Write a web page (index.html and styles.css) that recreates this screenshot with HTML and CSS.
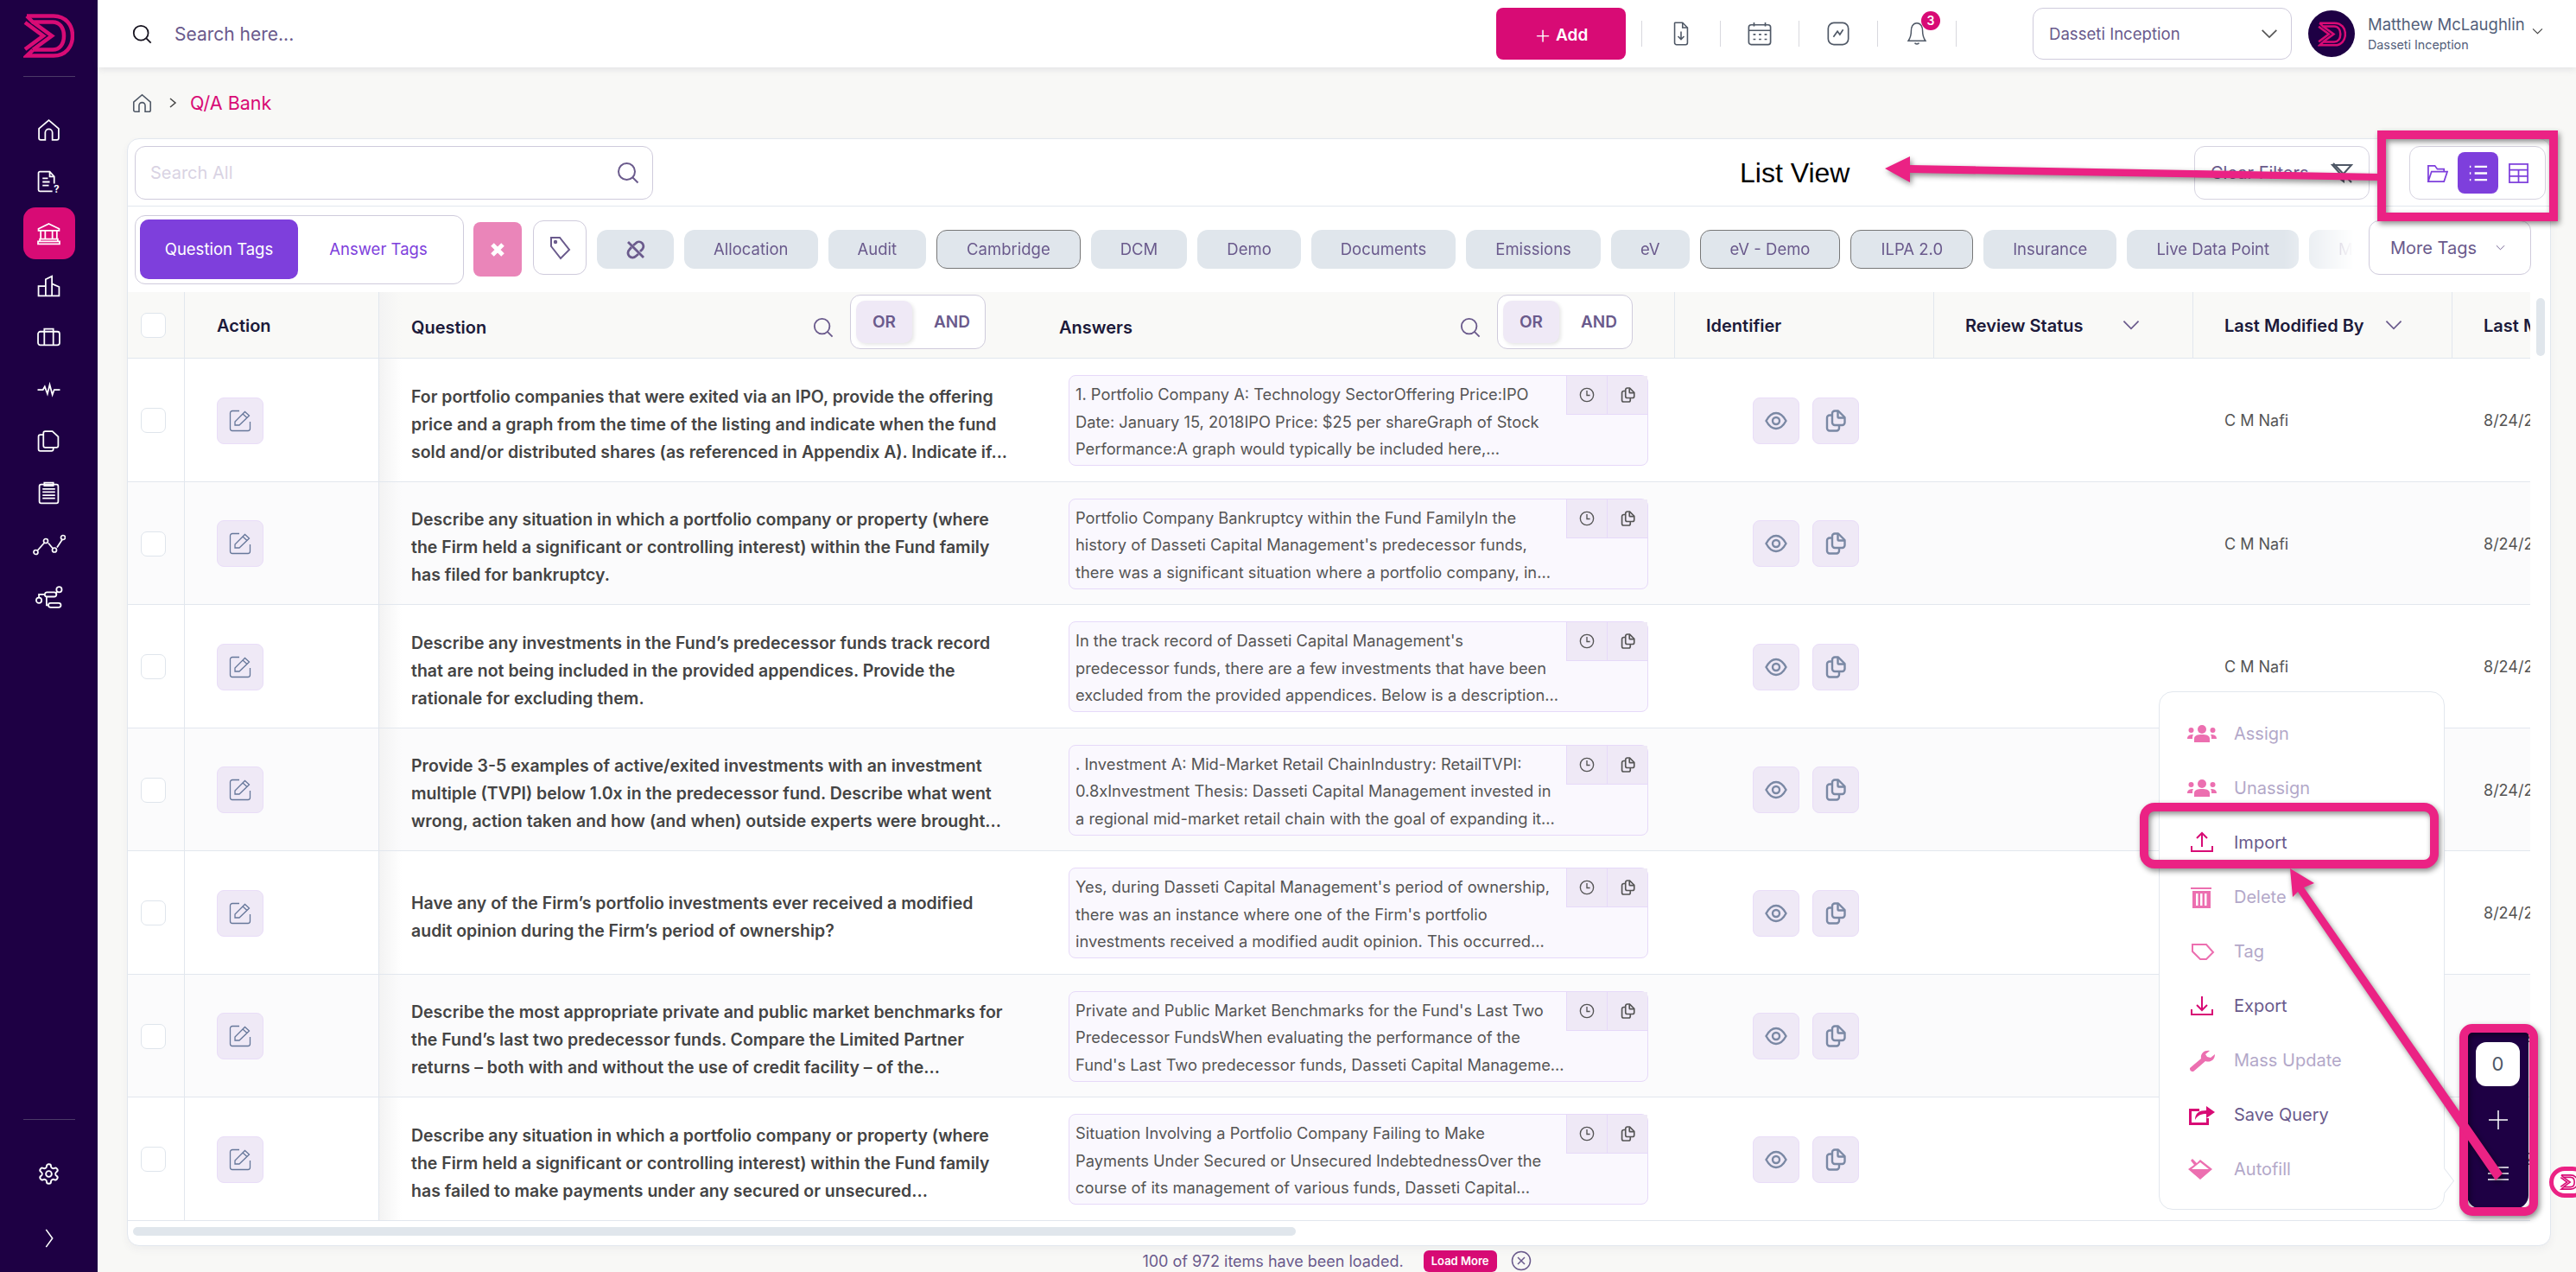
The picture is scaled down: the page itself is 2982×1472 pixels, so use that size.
FILE: index.html
```html
<!DOCTYPE html>
<html lang="en">

<head>
    <meta charset="UTF-8">
    <title>Q/A Bank</title>
    <link rel="stylesheet" href="styles.css">
</head>

<body>
    <svg class="sprites" width="0" height="0">
        <symbol id="logo" viewBox="0 0 59 51">
            <g fill="none" stroke="currentColor" stroke-width="4.500" stroke-linejoin="miter">
                <path d="M4 2.500H35C49 2.500 57 13 57 25.500S49 48.500 35 48.500H4L11 42" />
                <path d="M4 2.500L11 9.500H34C42 9.500 47 16 47 25.500S42 41.500 34 41.500H11" />
                <path d="M2 10L23 25.500L2 41" />
                <path d="M11 9.500L33 25.500L11 41.500" />
            </g>
        </symbol>
        <symbol id="edit" viewBox="0 0 26 26">
            <g fill="none" stroke="currentColor" stroke-width="1.300">
                <path d="M12 1.500H4A2.500 2.500 0 0 0 1.500 4V22A2.500 2.500 0 0 0 4 24.500H22A2.500 2.500 0 0 0 24.500 22V14" />
                <path d="M7 18V14L18.500 2.500L23.500 7L12 18Z" />
                <path d="M16 5L21 9.500" />
            </g>
        </symbol>
        <symbol id="clock" viewBox="0 0 20 20">
            <g fill="none" stroke="currentColor" stroke-width="1.500">
                <circle cx="10" cy="10" r="8.500" />
                <path d="M10 4.500V10.500H14" />
            </g>
        </symbol>
        <symbol id="copy" viewBox="0 0 24 26">
            <g fill="none" stroke="currentColor" stroke-width="2.400" stroke-linejoin="round">
                <path d="M11 1.500H15L22.500 9V15A3 3 0 0 1 19.500 18H11A3 3 0 0 1 8 15V4.500A3 3 0 0 1 11 1.500Z" />
                <path d="M14.500 2V8.500A1 1 0 0 0 15.500 9.500H22" />
                <path d="M8 6.500H5A3 3 0 0 0 2 9.500V21.500A3 3 0 0 0 5 24.500H13A3 3 0 0 0 16 21.500V18" />
            </g>
        </symbol>
        <symbol id="eye" viewBox="0 0 26 22">
            <g fill="none" stroke="currentColor" stroke-width="2.400">
                <path d="M1.500 11C5 4.500 9 2 13 2S21 4.500 24.500 11C21 17.500 17 20 13 20S5 17.500 1.500 11Z" />
                <circle cx="13" cy="11" r="4" />
            </g>
        </symbol>
        <symbol id="search" viewBox="0 0 26 26">
            <g fill="none" stroke="currentColor" stroke-width="2">
                <circle cx="11.500" cy="11.500" r="9.500" />
                <path d="M18.500 18.500L24.500 24.500" />
            </g>
        </symbol>
        <symbol id="chev" viewBox="0 0 24 14">
            <path d="M2 2L12 12L22 2" fill="none" stroke="currentColor" stroke-width="2" />
        </symbol>
        <symbol id="people" viewBox="0 0 34 20">
            <g fill="currentColor">
                <circle cx="17" cy="5" r="5" />
                <circle cx="4.500" cy="6" r="3" />
                <circle cx="29.500" cy="6" r="3" />
                <path d="M8 20V16C8 12 12 11 17 11S26 12 26 16V20Z" />
                <path d="M0 16C0 12 3 11 7 11C6 12 6 14 6 16H0Z" />
                <path d="M34 16C34 12 31 11 27 11C28 12 28 14 28 16H34Z" />
            </g>
        </symbol>
    </svg>

    <aside class="sidebar">
        <div class="brand">
            <svg class="brand_logo"><use href="#logo" /></svg>
        </div>
        <nav class="nav">
            <a class="nav_item">
                <svg viewBox="0 0 26 26"><path d="M2 11.500L13 2L24 11.500V22A2 2 0 0 1 22 24H17V16A3 3 0 0 0 9 16V24H4A2 2 0 0 1 2 22Z" /></svg>
            </a>
            <a class="nav_item">
                <svg viewBox="0 0 26 26"><path d="M19 15V7L14 1.500H3A1.500 1.500 0 0 0 1.500 3V22A1.500 1.500 0 0 0 3 23.500H17M14 1.500V7H19M6 9H12M6 13H14M6 17H13" /><text class="nav_q" x="18.500" y="25">?</text></svg>
            </a>
            <a class="nav_item nav_active">
                <svg viewBox="0 0 26 26"><path d="M13 2L24.500 7.500V9.500H1.500V7.500ZM4 9.500V19M9 9.500V19M17 9.500V19M22 9.500V19M3 19H23V21.500H3ZM1 21.500H25V24.500H1Z" /></svg>
            </a>
            <a class="nav_item">
                <svg viewBox="0 0 26 26"><path d="M1.500 24.500V13.500H9.500V24.500ZM9.500 24.500V6L16.500 2.500V24.500M16.500 11L24.500 14.500V24.500H1.500" /></svg>
            </a>
            <a class="nav_item">
                <svg viewBox="0 0 26 26"><rect x="1" y="6.500" width="24" height="15" rx="2.500" /><path d="M8 21.500V3.500H18V21.500" /></svg>
            </a>
            <a class="nav_item">
                <svg viewBox="0 0 26 26"><path d="M0.500 13.500H6.500L8.500 10L11.500 18L14 8L17 19L19 13.500H25.500" /></svg>
            </a>
            <a class="nav_item">
                <svg viewBox="0 0 26 26"><path d="M9 2H17L23.500 8V18A2 2 0 0 1 21.500 20H9A2 2 0 0 1 7 18V4A2 2 0 0 1 9 2ZM7 6H3.500A2 2 0 0 0 1.500 8V22A2 2 0 0 0 3.500 24H16A2 2 0 0 0 18 22V20" /></svg>
            </a>
            <a class="nav_item">
                <svg viewBox="0 0 26 26"><rect x="2.500" y="3.500" width="21" height="21" rx="2" /><path d="M8 1.500H18V5H8ZM6 8.500H20M6 12H20M6 15.500H20M6 19H20" /></svg>
            </a>
            <a class="nav_item nav_wide">
                <svg viewBox="0 0 38 26"><path d="M5 20L13 11M18 11L23 17M28 16L34 7" /><circle cx="3.500" cy="21.500" r="2.500" /><circle cx="15" cy="8.500" r="2.500" /><circle cx="25" cy="19" r="2.500" /><circle cx="35" cy="4.500" r="2.500" /></svg>
            </a>
            <a class="nav_item nav_wide">
                <svg viewBox="0 0 34 26"><circle cx="5.500" cy="17" r="3" /><rect x="12" y="8" width="13" height="5" rx="2.500" /><circle cx="28" cy="5" r="3" /><rect x="16" y="20" width="14" height="5" rx="2.500" /><path d="M5.500 14V10.500H12M25 10.500V8L26 7M14 13V22.500H16" /></svg>
            </a>
        </nav>
        <div class="sidebar_foot">
            <a class="nav_item">
                <svg viewBox="0 0 24 24"><path d="M12.220 2h-.44a2 2 0 0 0-2 2v.18a2 2 0 0 1-1 1.730l-.43.25a2 2 0 0 1-2 0l-.15-.08a2 2 0 0 0-2.730.73l-.22.38a2 2 0 0 0 .73 2.730l.15.1a2 2 0 0 1 1 1.720v.51a2 2 0 0 1-1 1.740l-.15.09a2 2 0 0 0-.73 2.730l.22.38a2 2 0 0 0 2.730.73l.15-.08a2 2 0 0 1 2 0l.43.25a2 2 0 0 1 1 1.730V20a2 2 0 0 0 2 2h.44a2 2 0 0 0 2-2v-.18a2 2 0 0 1 1-1.730l.43-.25a2 2 0 0 1 2 0l.15.08a2 2 0 0 0 2.730-.73l.22-.39a2 2 0 0 0-.73-2.730l-.15-.08a2 2 0 0 1-1-1.740v-.5a2 2 0 0 1 1-1.740l.15-.09a2 2 0 0 0 .73-2.730l-.22-.38a2 2 0 0 0-2.730-.73l-.15.08a2 2 0 0 1-2 0l-.43-.25a2 2 0 0 1-1-1.730V4a2 2 0 0 0-2-2z" /><circle cx="12" cy="12" r="3" /></svg>
            </a>
            <a class="nav_item nav_more">
                <svg viewBox="0 0 14 26"><path d="M3 2L11 13L3 24" /></svg>
            </a>
        </div>
    </aside>

    <div class="page">
        <header class="topbar">
            <svg class="top_search"><use href="#search" /></svg>
            <span class="top_placeholder">Search here...</span>
            <button class="add_btn"><span class="add_plus">+</span> Add</button>
            <div class="top_icons">
                <span class="top_icon">
                    <svg viewBox="0 0 20 32"><path d="M2 1.500H12L18.500 8V28A2.500 2.500 0 0 1 16 30.500H4A2.500 2.500 0 0 1 1.500 28V2Z" /><path d="M12 1.500V8H18.500M10 13V23M6 19.500L10 23.500L14 19.500" /></svg>
                </span>
                <span class="top_icon">
                    <svg viewBox="0 0 30 30"><rect x="1.500" y="4" width="27" height="24.500" rx="3" /><path d="M1.500 11H28.500M8 1V6M22 1V6M7 16H10M14 16H17M21 16H24M7 22H10M14 22H17M21 22H24" /></svg>
                </span>
                <span class="top_icon">
                    <svg viewBox="0 0 28 30"><rect x="1.500" y="1.500" width="25" height="27" rx="7" /><path d="M8 19L13 12L16 16L20 10" /></svg>
                </span>
                <span class="top_icon bell">
                    <svg viewBox="0 0 28 34"><path d="M14 2C8 2 6 8 6 13C6 20 4 24 2 27H26C24 24 22 20 22 13C22 8 20 2 14 2ZM11 30C12 32 16 32 17 30" /></svg>
                    <span class="bell_badge">3</span>
                </span>
            </div>
            <div class="org_select">
                <span>Dasseti Inception</span>
                <svg class="org_chev"><use href="#chev" /></svg>
            </div>
            <div class="avatar">
                <svg class="avatar_logo"><use href="#logo" /></svg>
            </div>
            <div class="user">
                <div class="user_name">Matthew McLaughlin</div>
                <div class="user_org">Dasseti Inception</div>
            </div>
            <svg class="user_chev"><use href="#chev" /></svg>
        </header>

        <div class="crumbs">
            <svg class="crumb_home" viewBox="0 0 26 26"><path d="M2 11.500L13 2L24 11.500V22A2 2 0 0 1 22 24H17V16A3 3 0 0 0 9 16V24H4A2 2 0 0 1 2 22Z" /></svg>
            <svg class="crumb_sep" viewBox="0 0 10 14"><path d="M2 2L8 7L2 12" /></svg>
            <span class="crumb_now">Q/A Bank</span>
        </div>

        <section class="card">
            <div class="card_top">
                <div class="search_all">
                    <span>Search All</span>
                    <svg class="search_icon"><use href="#search" /></svg>
                </div>
                <div class="card_top_right">
                    <button class="clear_btn">
                        <span>Clear Filters</span>
                        <svg viewBox="0 0 26 26"><path d="M2 4H24L15 14V23L11 20V14ZM3 2L24 24" /></svg>
                    </button>
                    <div class="view_switch">
                        <span class="view_opt">
                            <svg viewBox="0 0 26 26"><path d="M2 23V4H10L13 8H21V11M2 23L6 11H25L21 23Z" /></svg>
                        </span>
                        <span class="view_opt view_on">
                            <svg viewBox="0 0 26 26"><path d="M3 5H4.500M9 5H24M3 13H4.500M9 13H24M3 21H4.500M9 21H24" /></svg>
                        </span>
                        <span class="view_opt">
                            <svg viewBox="0 0 26 26"><rect x="2" y="2" width="22" height="22" /><path d="M2 9H24M2 16.500H24M13 9V24" /></svg>
                        </span>
                    </div>
                </div>
            </div>

            <div class="tag_row">
                <div class="tag_switch">
                    <span class="tag_tab tag_tab_on">Question Tags</span>
                    <span class="tag_tab">Answer Tags</span>
                </div>
                <button class="tag_clear">
                    <svg viewBox="0 0 20 20"><path d="M4 4L16 16M16 4L4 16" /></svg>
                </button>
                <button class="tag_icon">
                    <svg viewBox="0 0 26 30"><path d="M3 3H13L24 17L14 27L3 13Z" /><circle cx="8" cy="8" r="1.200" /></svg>
                </button>
                <div class="tag_list">
                    <span class="pill pill_icon">
                        <svg viewBox="0 0 22 22"><path d="M2 2L20 20" /><path d="M8 6L11 3.500A5 5 0 0 1 18.500 10.500L16 13" /><path d="M6 8L3.500 11A5 5 0 0 0 11 18.500L14 16" /></svg>
                    </span>
                    <span class="pill">Allocation</span>
                    <span class="pill">Audit</span>
                    <span class="pill pill_set">Cambridge</span>
                    <span class="pill">DCM</span>
                    <span class="pill">Demo</span>
                    <span class="pill">Documents</span>
                    <span class="pill">Emissions</span>
                    <span class="pill">eV</span>
                    <span class="pill pill_set">eV - Demo</span>
                    <span class="pill pill_set">ILPA 2.0</span>
                    <span class="pill">Insurance</span>
                    <span class="pill">Live Data Point</span>
                    <span class="pill">Monitoring</span>
                </div>
                <button class="more_tags">
                    <span>More Tags</span>
                    <svg><use href="#chev" /></svg>
                </button>
            </div>

            <div class="table_wrap">
                <div class="grid_row grid_head">
                    <div class="cell cell_check"><span class="check"></span></div>
                    <div class="cell cell_action"><span class="head_text">Action</span></div>
                    <div class="cell cell_q">
                        <span class="head_text head_grow">Question</span>
                        <svg class="head_search"><use href="#search" /></svg>
                        <div class="andor"><span class="andor_on">OR</span><span>AND</span></div>
                    </div>
                    <div class="cell cell_a">
                        <span class="head_text head_grow">Answers</span>
                        <svg class="head_search"><use href="#search" /></svg>
                        <div class="andor"><span class="andor_on">OR</span><span>AND</span></div>
                    </div>
                    <div class="cell cell_plain"><span class="head_text">Identifier</span></div>
                    <div class="cell cell_plain"><span class="head_text">Review Status</span><svg class="head_chev"><use href="#chev" /></svg></div>
                    <div class="cell cell_plain"><span class="head_text">Last Modified By</span><svg class="head_chev head_chev_near"><use href="#chev" /></svg></div>
                    <div class="cell cell_plain"><span class="head_text">Last Modified On</span></div>
                </div>

                <div class="grid_row">
                    <div class="cell cell_check"><span class="check"></span></div>
                    <div class="cell cell_action"><button class="icon_btn edit_btn"><svg><use href="#edit" /></svg></button></div>
                    <div class="cell cell_q"><p class="question">For portfolio companies that were exited via an IPO, provide the offering price and a graph from the time of the listing and indicate when the fund sold and/or distributed shares (as referenced in Appendix A). Indicate if...</p></div>
                    <div class="cell cell_a">
                        <div class="answer">
                            <div class="answer_tools"><span><svg class="ic_clock"><use href="#clock" /></svg></span><span><svg class="ic_tool_copy"><use href="#copy" /></svg></span></div>
                            <p>1. Portfolio Company A: Technology SectorOffering Price:IPO Date: January 15, 2018IPO Price: $25 per shareGraph of Stock Performance:A graph would typically be included here,...</p>
                        </div>
                    </div>
                    <div class="cell cell_ident"><button class="icon_btn"><svg class="ic_eye"><use href="#eye" /></svg></button><button class="icon_btn"><svg class="ic_copy"><use href="#copy" /></svg></button></div>
                    <div class="cell cell_text"></div>
                    <div class="cell cell_text">C M Nafi</div>
                    <div class="cell cell_text">8/24/2024</div>
                </div>

                <div class="grid_row">
                    <div class="cell cell_check"><span class="check"></span></div>
                    <div class="cell cell_action"><button class="icon_btn edit_btn"><svg><use href="#edit" /></svg></button></div>
                    <div class="cell cell_q"><p class="question">Describe any situation in which a portfolio company or property (where the Firm held a significant or controlling interest) within the Fund family has filed for bankruptcy.</p></div>
                    <div class="cell cell_a">
                        <div class="answer">
                            <div class="answer_tools"><span><svg class="ic_clock"><use href="#clock" /></svg></span><span><svg class="ic_tool_copy"><use href="#copy" /></svg></span></div>
                            <p>Portfolio Company Bankruptcy within the Fund FamilyIn the history of Dasseti Capital Management's predecessor funds, there was a significant situation where a portfolio company, in...</p>
                        </div>
                    </div>
                    <div class="cell cell_ident"><button class="icon_btn"><svg class="ic_eye"><use href="#eye" /></svg></button><button class="icon_btn"><svg class="ic_copy"><use href="#copy" /></svg></button></div>
                    <div class="cell cell_text"></div>
                    <div class="cell cell_text">C M Nafi</div>
                    <div class="cell cell_text">8/24/2024</div>
                </div>

                <div class="grid_row">
                    <div class="cell cell_check"><span class="check"></span></div>
                    <div class="cell cell_action"><button class="icon_btn edit_btn"><svg><use href="#edit" /></svg></button></div>
                    <div class="cell cell_q"><p class="question">Describe any investments in the Fund’s predecessor funds track record that are not being included in the provided appendices. Provide the rationale for excluding them.</p></div>
                    <div class="cell cell_a">
                        <div class="answer">
                            <div class="answer_tools"><span><svg class="ic_clock"><use href="#clock" /></svg></span><span><svg class="ic_tool_copy"><use href="#copy" /></svg></span></div>
                            <p>In the track record of Dasseti Capital Management's predecessor funds, there are a few investments that have been excluded from the provided appendices. Below is a description...</p>
                        </div>
                    </div>
                    <div class="cell cell_ident"><button class="icon_btn"><svg class="ic_eye"><use href="#eye" /></svg></button><button class="icon_btn"><svg class="ic_copy"><use href="#copy" /></svg></button></div>
                    <div class="cell cell_text"></div>
                    <div class="cell cell_text">C M Nafi</div>
                    <div class="cell cell_text">8/24/2024</div>
                </div>

                <div class="grid_row">
                    <div class="cell cell_check"><span class="check"></span></div>
                    <div class="cell cell_action"><button class="icon_btn edit_btn"><svg><use href="#edit" /></svg></button></div>
                    <div class="cell cell_q"><p class="question">Provide 3-5 examples of active/exited investments with an investment multiple (TVPI) below 1.0x in the predecessor fund. Describe what went wrong, action taken and how (and when) outside experts were brought...</p></div>
                    <div class="cell cell_a">
                        <div class="answer">
                            <div class="answer_tools"><span><svg class="ic_clock"><use href="#clock" /></svg></span><span><svg class="ic_tool_copy"><use href="#copy" /></svg></span></div>
                            <p>. Investment A: Mid-Market Retail ChainIndustry: RetailTVPI: 0.8xInvestment Thesis: Dasseti Capital Management invested in a regional mid-market retail chain with the goal of expanding it...</p>
                        </div>
                    </div>
                    <div class="cell cell_ident"><button class="icon_btn"><svg class="ic_eye"><use href="#eye" /></svg></button><button class="icon_btn"><svg class="ic_copy"><use href="#copy" /></svg></button></div>
                    <div class="cell cell_text"></div>
                    <div class="cell cell_text">C M Nafi</div>
                    <div class="cell cell_text">8/24/2024</div>
                </div>

                <div class="grid_row">
                    <div class="cell cell_check"><span class="check"></span></div>
                    <div class="cell cell_action"><button class="icon_btn edit_btn"><svg><use href="#edit" /></svg></button></div>
                    <div class="cell cell_q"><p class="question">Have any of the Firm’s portfolio investments ever received a modified audit opinion during the Firm’s period of ownership?</p></div>
                    <div class="cell cell_a">
                        <div class="answer">
                            <div class="answer_tools"><span><svg class="ic_clock"><use href="#clock" /></svg></span><span><svg class="ic_tool_copy"><use href="#copy" /></svg></span></div>
                            <p>Yes, during Dasseti Capital Management's period of ownership, there was an instance where one of the Firm's portfolio investments received a modified audit opinion. This occurred...</p>
                        </div>
                    </div>
                    <div class="cell cell_ident"><button class="icon_btn"><svg class="ic_eye"><use href="#eye" /></svg></button><button class="icon_btn"><svg class="ic_copy"><use href="#copy" /></svg></button></div>
                    <div class="cell cell_text"></div>
                    <div class="cell cell_text">C M Nafi</div>
                    <div class="cell cell_text">8/24/2024</div>
                </div>

                <div class="grid_row">
                    <div class="cell cell_check"><span class="check"></span></div>
                    <div class="cell cell_action"><button class="icon_btn edit_btn"><svg><use href="#edit" /></svg></button></div>
                    <div class="cell cell_q"><p class="question">Describe the most appropriate private and public market benchmarks for the Fund’s last two predecessor funds. Compare the Limited Partner returns – both with and without the use of credit facility – of the...</p></div>
                    <div class="cell cell_a">
                        <div class="answer">
                            <div class="answer_tools"><span><svg class="ic_clock"><use href="#clock" /></svg></span><span><svg class="ic_tool_copy"><use href="#copy" /></svg></span></div>
                            <p>Private and Public Market Benchmarks for the Fund's Last Two Predecessor FundsWhen evaluating the performance of the Fund's Last Two predecessor funds, Dasseti Capital Manageme...</p>
                        </div>
                    </div>
                    <div class="cell cell_ident"><button class="icon_btn"><svg class="ic_eye"><use href="#eye" /></svg></button><button class="icon_btn"><svg class="ic_copy"><use href="#copy" /></svg></button></div>
                    <div class="cell cell_text"></div>
                    <div class="cell cell_text">C M Nafi</div>
                    <div class="cell cell_text">8/24/2024</div>
                </div>

                <div class="grid_row">
                    <div class="cell cell_check"><span class="check"></span></div>
                    <div class="cell cell_action"><button class="icon_btn edit_btn"><svg><use href="#edit" /></svg></button></div>
                    <div class="cell cell_q"><p class="question">Describe any situation in which a portfolio company or property (where the Firm held a significant or controlling interest) within the Fund family has failed to make payments under any secured or unsecured...</p></div>
                    <div class="cell cell_a">
                        <div class="answer">
                            <div class="answer_tools"><span><svg class="ic_clock"><use href="#clock" /></svg></span><span><svg class="ic_tool_copy"><use href="#copy" /></svg></span></div>
                            <p>Situation Involving a Portfolio Company Failing to Make Payments Under Secured or Unsecured IndebtednessOver the course of its management of various funds, Dasseti Capital...</p>
                        </div>
                    </div>
                    <div class="cell cell_ident"><button class="icon_btn"><svg class="ic_eye"><use href="#eye" /></svg></button><button class="icon_btn"><svg class="ic_copy"><use href="#copy" /></svg></button></div>
                    <div class="cell cell_text"></div>
                    <div class="cell cell_text">C M Nafi</div>
                    <div class="cell cell_text">8/24/2024</div>
                </div>
            </div>
            <div class="scroll_y"></div>
            <div class="scroll_x"><span></span></div>

            <div class="bulk_menu">
                <div class="bulk_item bulk_off"><svg class="bulk_svg"><use href="#people" /></svg><span>Assign</span></div>
                <div class="bulk_item bulk_off"><svg class="bulk_svg"><use href="#people" /></svg><span>Unassign</span></div>
                <div class="bulk_item"><svg class="bulk_svg bulk_line" viewBox="0 0 34 26"><path d="M5 17V23H29V17M17 18V3M11 8L17 2L23 8" /></svg><span>Import</span></div>
                <div class="bulk_item bulk_off"><svg class="bulk_svg bulk_fill" viewBox="0 0 34 26"><path d="M4 2H28V4H4ZM6 6H27V26H6ZM10 9V23H12.500V9ZM15 9V23H17.500V9ZM20 9V23H22.500V9Z" fill-rule="evenodd" /></svg><span>Delete</span></div>
                <div class="bulk_item bulk_off"><svg class="bulk_svg bulk_line" viewBox="0 0 34 26"><path d="M6 5H22L30 14L22 22H15L6 13Z" /></svg><span>Tag</span></div>
                <div class="bulk_item"><svg class="bulk_svg bulk_line" viewBox="0 0 34 26"><path d="M5 17V23H29V17M17 2V18M11 12L17 18L23 12" /></svg><span>Export</span></div>
                <div class="bulk_item bulk_off"><svg class="bulk_svg bulk_fill" viewBox="0 0 34 26"><path d="M3 22L16 11C15 6 19 1 26 2L21 6L23 9L27 10L32 6C32 13 26 16 21 14L7 26C4 26 3 25 3 22Z" /></svg><span>Mass Update</span></div>
                <div class="bulk_item"><svg class="bulk_svg bulk_fill" viewBox="0 0 34 26"><path d="M2 6H14V9H5V22H22V17H25V25H2ZM9 19C9 11 14 8 22 8V3L32 10L22 17V12C17 12 12 13 9 19Z" /></svg><span>Save Query</span></div>
                <div class="bulk_item bulk_off"><svg class="bulk_svg bulk_fill" viewBox="0 0 34 26"><path d="M1 13L8 8L4 3L6 1L11 6L15 2L29 13L15 25ZM5 13H25L15 5Z" fill-rule="evenodd" /></svg><span>Autofill</span></div>
                <span class="bulk_tip"></span>
            </div>

            <div class="fab">
                <span class="fab_count">0</span>
                <svg class="fab_plus" viewBox="0 0 22 22"><path d="M11 0V22M0 11H22" /></svg>
                <svg class="fab_lines" viewBox="0 0 26 18"><path d="M1 2H25M1 9H25M1 16H25" /></svg>
            </div>
        </section>

        <footer class="load_bar">
            <span>100 of 972 items have been loaded.</span>
            <button class="load_more">Load More</button>
            <svg class="load_close" viewBox="0 0 24 24"><circle cx="12" cy="12" r="10.500" /><path d="M8 8L16 16M16 8L8 16" /></svg>
        </footer>
    </div>

    <div class="side_tab"><svg><use href="#logo" /></svg></div>

    <div class="list_note">List View</div>

    <svg class="marks" viewBox="0 0 2982 1472">
        <rect class="mark_box" x="2757" y="156" width="199" height="95" />
        <polygon class="mark_fill" points="2182,195 2211,181 2211,191 2757,201 2757,209 2211,200 2211,211" />
        <rect class="mark_box" x="2482" y="934" width="336" height="66" rx="12" />
        <rect class="mark_box" x="2852" y="1190" width="81" height="212" rx="10" />
        <polygon class="mark_fill" points="2651,1005 2679,1022 2667,1027 2897,1358 2889,1366 2660,1032 2654,1038" />
    </svg>
</body>

</html>
```

FILE: styles.css
```css
* {
    box-sizing: border-box;
}

:root {
    --ink: #1e0044;
    --pink: #d80b75;
    --violet: #7e3fdc;
    --muted: #6a5a8c;
    --line: #e2e7ee;
    --soft: #efe9f6;
}

body {
    margin: 0;
    width: 2982px;
    height: 1472px;
    overflow: hidden;
    display: flex;
    position: relative;
    font-family: Inter, "Noto Sans", sans-serif;
    background: #f8f8f6;
    color: var(--muted);
}

button {
    font-family: inherit;
    padding: 0;
    cursor: pointer;
}

p {
    margin: 0;
}

.sprites {
    position: absolute;
}

/* sidebar */
.sidebar {
    width: 113px;
    flex: none;
    background: var(--ink);
    display: flex;
    flex-direction: column;
    align-items: center;
}

.brand {
    width: 60px;
    height: 89px;
    padding-top: 16px;
    border-bottom: 1px solid #4b3a67;
}

.brand_logo {
    display: block;
    width: 59px;
    height: 51px;
    color: var(--pink);
}

.nav {
    margin-top: 31px;
    display: flex;
    flex-direction: column;
    align-items: center;
}

.nav_item {
    width: 60px;
    height: 60px;
    display: flex;
    align-items: center;
    justify-content: center;
    border-radius: 14px;
}

.nav_item svg {
    width: 27px;
    height: 27px;
    fill: none;
    stroke: #fff;
    stroke-width: 1.700;
}

.nav_wide svg {
    width: 38px;
}

.nav_q {
    font: 700 11px Inter, sans-serif;
    fill: #fff;
    stroke: none;
}

.nav_active {
    background: var(--pink);
}

.sidebar_foot {
    margin-top: auto;
    width: 60px;
    height: 177px;
    padding-top: 32px;
    border-top: 1px solid #4b3a67;
    display: flex;
    flex-direction: column;
    gap: 15px;
}

.nav_more svg {
    width: 14px;
    height: 24px;
}

/* top bar */
.page {
    flex: 1;
    min-width: 0;
    display: flex;
    flex-direction: column;
}

.topbar {
    height: 78px;
    flex: none;
    background: #fff;
    display: flex;
    align-items: center;
    padding: 0 38px 0 40px;
    box-shadow: 0 2px 8px rgba(60, 60, 90, .12);
    position: relative;
}

.top_search {
    width: 23px;
    height: 23px;
    color: #16131f;
}

.top_placeholder {
    margin-left: 26px;
    font-size: 21px;
    flex: 1;
}

.add_btn {
    width: 150px;
    height: 60px;
    border: 0;
    border-radius: 8px;
    background: var(--pink);
    color: #fff;
    font-size: 19px;
    font-weight: 600;
}

.add_plus {
    font-weight: 200;
    font-size: 32px;
    vertical-align: -4px;
}

.top_icons {
    margin-left: 18px;
    display: flex;
}

.top_icon {
    width: 91px;
    height: 30px;
    border-left: 1px solid #d8d8de;
    display: flex;
    align-items: center;
    justify-content: center;
    position: relative;
}

.top_icon:last-child {
    width: 92px;
    border-right: 1px solid #d8d8de;
}

.top_icon svg {
    width: 28px;
    height: 28px;
    fill: none;
    stroke: #4f5866;
    stroke-width: 1.800;
}

.bell_badge {
    position: absolute;
    left: 50px;
    top: -11px;
    width: 22px;
    height: 22px;
    border-radius: 50%;
    background: var(--pink);
    color: #fff;
    font-size: 14px;
    font-weight: 600;
    text-align: center;
    line-height: 22px;
}

.org_select {
    margin-left: 88px;
    width: 300px;
    height: 60px;
    border: 1px solid #cfcbdc;
    border-radius: 12px;
    display: flex;
    align-items: center;
    justify-content: space-between;
    padding: 0 15px 0 18px;
    font-size: 18.600px;
}

.org_chev {
    width: 20px;
    height: 12px;
    color: #555;
}

.avatar {
    margin-left: 19px;
    width: 54px;
    height: 54px;
    border-radius: 50%;
    background: var(--ink);
    display: grid;
    place-items: center;
    flex: none;
}

.avatar_logo {
    width: 33px;
    height: 29px;
    color: var(--pink);
}

.user {
    margin-left: 15px;
    width: 185px;
    white-space: nowrap;
}

.user_name {
    font-size: 18.500px;
    color: #53607a;
    line-height: 26px;
}

.user_org {
    font-size: 14.300px;
    color: #53607a;
    line-height: 22px;
}

.user_chev {
    width: 13px;
    height: 8px;
    margin: -6px 0 0 5px;
    color: #444;
}

/* breadcrumb */
.crumbs {
    height: 82px;
    flex: none;
    display: flex;
    align-items: center;
    padding-left: 40px;
}

.crumb_home {
    width: 23px;
    height: 25px;
    fill: none;
    stroke: #4f5866;
    stroke-width: 1.800;
}

.crumb_sep {
    width: 10px;
    height: 14px;
    margin-left: 19px;
    fill: none;
    stroke: #444;
    stroke-width: 1.500;
}

.crumb_now {
    margin-left: 15px;
    font-size: 21.500px;
    color: var(--pink);
}

/* card */
.card {
    position: relative;
    height: 1282px;
    flex: none;
    margin: 0 29px 0 34px;
    background: #fff;
    border: 1px solid var(--line);
    border-radius: 14px;
    box-shadow: 0 4px 10px rgba(60, 60, 90, .05);
}

.card_top {
    height: 78px;
    display: flex;
    justify-content: space-between;
    padding: 8px 5px 0 8px;
    border-bottom: 1px solid var(--line);
}

.search_all {
    width: 600px;
    height: 62px;
    border: 1px solid #cfcbdc;
    border-radius: 12px;
    display: flex;
    align-items: center;
    justify-content: space-between;
    padding: 0 15px 0 17px;
    font-size: 20px;
    color: #d9d3e3;
}

.search_icon {
    width: 26px;
    height: 26px;
    color: var(--muted);
}

.card_top_right {
    display: flex;
    gap: 46px;
}

.clear_btn {
    width: 203px;
    height: 62px;
    background: #fff;
    border: 1px solid #d6d3e0;
    border-radius: 12px;
    color: var(--muted);
    font-size: 20px;
    display: flex;
    align-items: center;
    justify-content: space-between;
    padding: 0 18px;
}

.clear_btn svg {
    width: 26px;
    height: 26px;
    fill: none;
    stroke: #4f5866;
    stroke-width: 2;
}

.view_switch {
    width: 158px;
    height: 62px;
    border: 1px solid #d6d3e0;
    border-radius: 12px;
    display: flex;
    align-items: center;
    justify-content: center;
}

.view_opt {
    width: 47px;
    height: 48px;
    border-radius: 8px;
    display: grid;
    place-items: center;
}

.view_opt svg {
    width: 25px;
    height: 25px;
    fill: none;
    stroke: var(--violet);
    stroke-width: 1.800;
}

.view_on {
    background: var(--violet);
}

.view_on svg {
    stroke: #fff;
    stroke-width: 2.400;
}

/* tags */
.tag_row {
    height: 99px;
    display: flex;
    align-items: center;
    padding: 0 22px 0 8px;
}

.tag_switch {
    width: 381px;
    height: 80px;
    border: 1px solid #cfcbdc;
    border-radius: 12px;
    padding: 5px;
    display: flex;
    align-items: center;
    flex: none;
}

.tag_tab {
    flex: 1;
    height: 69px;
    line-height: 69px;
    text-align: center;
    font-size: 18.500px;
    color: var(--violet);
    border-radius: 10px;
}

.tag_tab_on {
    flex: none;
    width: 183px;
    background: var(--violet);
    color: #fff;
}

.tag_clear {
    width: 56px;
    height: 63px;
    margin-left: 11px;
    border: 0;
    border-radius: 8px;
    background: #ea85b9;
    flex: none;
}

.tag_clear svg {
    width: 20px;
    height: 20px;
    display: block;
    margin: auto;
    stroke: #fff;
    stroke-width: 5;
}

.tag_icon {
    width: 62px;
    height: 63px;
    margin: -4px 0 0 13px;
    background: #fff;
    border: 1px solid #cfcbdc;
    border-radius: 12px;
    flex: none;
}

.tag_icon svg {
    width: 26px;
    height: 30px;
    display: block;
    margin: auto;
    fill: none;
    stroke: var(--muted);
    stroke-width: 2;
}

.tag_list {
    flex: 1;
    min-width: 0;
    margin-left: 12px;
    margin-right: 17px;
    display: flex;
    gap: 12px;
    overflow: hidden;
    -webkit-mask-image: linear-gradient(90deg, #000 96%, transparent);
    mask-image: linear-gradient(90deg, #000 96%, transparent);
}

.pill {
    height: 45px;
    line-height: 45px;
    padding: 0 34px;
    background: #e0e6ec;
    border-radius: 12px;
    font-size: 18.500px;
    white-space: nowrap;
    flex: none;
}

.pill_set {
    border: 1px solid #777;
    line-height: 43px;
}

.pill_icon {
    width: 89px;
    padding: 0;
    display: grid;
    place-items: center;
}

.pill_icon svg {
    width: 22px;
    height: 22px;
    fill: none;
    stroke: var(--muted);
    stroke-width: 2.800;
}

.more_tags {
    width: 188px;
    height: 63px;
    margin-top: -4px;
    background: #fff;
    border: 1px solid #cfcbdc;
    border-radius: 12px;
    color: var(--muted);
    font-size: 20px;
    flex: none;
    display: flex;
    align-items: center;
    gap: 22px;
    padding-left: 24px;
}

.more_tags svg {
    width: 11px;
    height: 7px;
}

/* table */
.table_wrap {
    position: relative;
    width: 2781px;
    overflow: hidden;
}

.grid_row {
    display: grid;
    grid-template-columns: 66px 225px 750px 750px 300px 300px 300px 300px;
    height: 142.500px;
    border-bottom: 1px solid var(--line);
    background: #fff;
}

.grid_row:nth-child(odd) {
    background: #fbfbfc;
}

.grid_row.grid_head {
    height: 77px;
    background: #f9f9f7;
}

.cell {
    display: flex;
    align-items: center;
    min-width: 0;
}

.grid_row:not(.grid_head) .cell {
    padding-top: 2px;
}

.cell_check {
    justify-content: center;
    padding-right: 8px;
    padding-left: 1px;
    border-right: 1px solid var(--line);
}

.check {
    width: 29px;
    height: 29px;
    background: #fff;
    border: 1px solid #dfe5ec;
    border-radius: 7px;
}

.cell_action {
    padding-left: 37px;
    border-right: 1px solid var(--line);
}

.grid_head .cell_action .head_text,
.grid_head .cell_plain .head_text {
    padding-top: 2px;
}

.cell_q {
    padding-left: 37px;
    background: linear-gradient(90deg, #f3f3f3, transparent 26px);
}

.grid_head .cell_q {
    padding-right: 48px;
}

.cell_a {
    padding-left: 48px;
}

.grid_head .cell_a {
    padding: 0 48px 0 37px;
    border-right: 1px solid var(--line);
}

.grid_head .cell_plain {
    padding-left: 36px;
    border-right: 1px solid var(--line);
}

.head_text {
    font-size: 20px;
    font-weight: 600;
    color: #1c1a3a;
    white-space: nowrap;
}

.cell_q .head_text,
.cell_a .head_text {
    padding-top: 6px;
}

.head_grow {
    flex: 1;
}

.head_search {
    width: 24px;
    height: 24px;
    margin: 6px 19px 0 0;
    color: var(--muted);
}

.head_chev {
    width: 22px;
    height: 12px;
    margin-left: 44px;
    color: var(--muted);
}

.head_chev_near {
    margin-left: 23px;
}

.andor {
    width: 157px;
    height: 63px;
    margin-top: -7px;
    background: #fff;
    border: 1px solid #cfcbdc;
    border-radius: 12px;
    display: flex;
    align-items: center;
    padding-left: 6px;
    font-size: 19px;
    font-weight: 600;
}

.andor span {
    flex: 1;
    padding-left: 8px;
    text-align: center;
}

.andor .andor_on {
    flex: none;
    width: 65px;
    height: 49px;
    padding-left: 0;
    line-height: 49px;
    background: var(--soft);
    border-radius: 10px;
    box-shadow: 2px 2px 4px rgba(0, 0, 0, .1);
}

.icon_btn {
    width: 54px;
    height: 54px;
    background: var(--soft);
    border: 1px solid #e9ddf8;
    border-radius: 8px;
    display: grid;
    place-items: center;
    flex: none;
}

.icon_btn svg {
    width: 26px;
    height: 26px;
    color: #66779a;
}

.icon_btn .ic_eye,
.icon_btn .ic_copy {
    color: #7a88a4;
}

.question {
    padding-top: 8px;
    font-size: 19.500px;
    font-weight: 600;
    line-height: 32px;
    color: #444;
    width: 700px;
}

.answer {
    width: 671px;
    height: 105px;
    background: #faf8fe;
    border: 1px solid #e6d9f9;
    border-radius: 8px;
    padding: 6px 0 0 7px;
    font-size: 18.300px;
    line-height: 31.500px;
    color: #555;
}

.answer_tools {
    float: right;
    display: flex;
    height: 45px;
    margin: -6px 0 0 12px;
}

.answer_tools span {
    width: 47px;
    background: var(--soft);
    border-left: 1px solid #e6d9f9;
    border-bottom: 1px solid #e6d9f9;
    display: grid;
    place-items: center;
}

.ic_clock {
    width: 18px;
    height: 18px;
    color: #555;
}

.ic_tool_copy {
    width: 17px;
    height: 18px;
    color: #555;
}

.cell_ident {
    padding-left: 90px;
    gap: 15px;
}

.cell_text {
    padding-left: 36px;
    font-size: 18px;
    color: #555;
    white-space: nowrap;
}

.scroll_y {
    position: absolute;
    left: 2788px;
    top: 184px;
    width: 10px;
    height: 67px;
    background: #e0e6ec;
    border-radius: 5px;
}

.scroll_x {
    height: 10px;
    margin: 7px 0 0 6px;
    width: 1346px;
    background: #e0e6ec;
    border-radius: 5px;
}

/* bulk actions */
.bulk_menu {
    position: absolute;
    left: 2351px;
    top: 639px;
    width: 331px;
    height: 600px;
    padding: 16px 0;
    background: #fff;
    border: 1px solid var(--line);
    border-radius: 16px;
    z-index: 3;
}

.bulk_item {
    height: 63px;
    display: flex;
    align-items: center;
    padding-left: 32px;
    font-size: 20px;
    color: var(--muted);
}

.bulk_off {
    color: #b3a8c9;
}

.bulk_svg {
    width: 34px;
    height: 26px;
    margin-right: 20px;
    color: var(--pink);
}

.bulk_off .bulk_svg {
    color: #ec6fb0;
}

.bulk_line {
    fill: none;
    stroke: currentColor;
    stroke-width: 2;
}

.bulk_fill {
    fill: currentColor;
}

.bulk_tip {
    position: absolute;
    right: -10px;
    top: 556px;
    width: 19px;
    height: 19px;
    background: #fff;
    border-top: 1px solid var(--line);
    border-right: 1px solid var(--line);
    transform: rotate(45deg) skew(8deg, 8deg);
}

.fab {
    position: absolute;
    left: 2708px;
    top: 1034px;
    width: 71px;
    height: 204px;
    background: var(--ink);
    border-radius: 0 0 16px 16px;
    display: flex;
    flex-direction: column;
    align-items: center;
    padding-top: 11px;
    z-index: 3;
}

.fab_count {
    width: 51px;
    height: 51px;
    line-height: 51px;
    background: #fff;
    border-radius: 12px;
    text-align: center;
    font-size: 22px;
    color: #4f5866;
}

.fab_plus {
    width: 22px;
    height: 22px;
    margin-top: 28px;
    fill: none;
    stroke: #fff;
    stroke-width: 1.500;
}

.fab_lines {
    width: 26px;
    height: 18px;
    margin-top: 42px;
    fill: none;
    stroke: #fff;
    stroke-width: 1.500;
}

/* load more */
.load_bar {
    flex: 1;
    display: flex;
    align-items: center;
    justify-content: center;
    font-size: 18px;
    padding-top: 4px;
}

.load_more {
    width: 85px;
    height: 25px;
    margin-left: 23px;
    border: 0;
    border-radius: 6px;
    background: var(--pink);
    color: #fff;
    font-size: 13px;
    font-weight: 600;
}

.load_close {
    width: 24px;
    height: 24px;
    margin-left: 16px;
    fill: none;
    stroke: var(--muted);
    stroke-width: 1.500;
}

/* side tab and screenshot annotations */
.side_tab {
    position: absolute;
    left: 2951px;
    top: 1350px;
    width: 45px;
    height: 36px;
    background: #fff;
    border: 5px solid #eb2284;
    border-radius: 18px;
    padding: 4px 0 0 4px;
}

.side_tab svg {
    display: block;
    width: 28px;
    height: 18px;
    color: var(--pink);
}

.list_note {
    position: absolute;
    left: 2014px;
    top: 182px;
    font: 32px/37px "Liberation Sans", Arial, sans-serif;
    color: #000;
}

.marks {
    position: absolute;
    left: 0;
    top: 0;
    width: 2982px;
    height: 1472px;
    pointer-events: none;
    filter: drop-shadow(2px 3px 3px rgba(0, 0, 0, .45));
    z-index: 5;
}

.mark_box {
    fill: none;
    stroke: #eb2284;
    stroke-width: 10;
}

.mark_fill {
    fill: #eb2284;
}
```
